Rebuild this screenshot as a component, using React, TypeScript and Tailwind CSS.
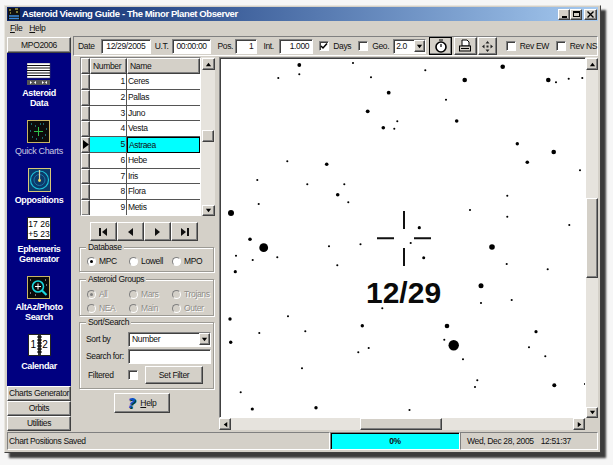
import React from 'react';

const raised = 'border border-t-white border-l-white border-r-[#404040] border-b-[#404040] bg-[#d4d0c8] shadow-[inset_-1px_-1px_0_#808080]';
const sunken = 'border border-t-[#808080] border-l-[#808080] border-r-white border-b-white bg-white shadow-[inset_1px_1px_0_#404040]';
const shallow = 'border border-t-[#808080] border-l-[#808080] border-r-white border-b-white';
const groupBox = 'relative border border-[#9c9a94] shadow-[inset_1px_1px_0_#fff,1px_1px_0_#fff]';

const small: [number, number][] = [
  [353, 63], [299.3, 74.3], [278.3, 78], [371, 77.3], [397.3, 121.3], [394.3, 128.7], [287.3, 161.3], [257.3, 180],
  [307.3, 184.3], [344.3, 184.3], [348.3, 202.3], [258.7, 204], [360.5, 244.3], [425.3, 70.3], [556, 82.3], [568.7, 78.7],
  [582.3, 78], [446, 99.7], [580, 170.3], [507.3, 195.7], [470, 210], [507.3, 216.7], [569.3, 225], [410.7, 243],
  [329, 246.3], [236, 255.7], [277.3, 257.3], [252.7, 260], [337.3, 265.3], [382.3, 308.3], [288, 316.3], [305.3, 331.3],
  [259.3, 333], [368.7, 348], [358.3, 352.3], [302, 368.3], [240.7, 392.3], [409.5, 410], [506.7, 264], [547.7, 269.3],
  [481, 303], [511.7, 300], [444.3, 339.7], [529, 347.3], [463, 359.3], [545.3, 356.3], [477.3, 380.3], [475, 387], [585, 384],
];
const big: [number, number, number][] = [
  [299.3, 65, 1.9], [388.7, 92.7, 1.9], [367.7, 111.3, 1.9], [383.3, 127.7, 1.8], [326.7, 164.3, 1.8], [337.7, 194.7, 1.8],
  [231, 213, 3], [250, 239.3, 1.8], [263.7, 247.7, 4.4], [502.7, 66.7, 2.3], [464.7, 80, 2.3], [548.3, 80, 2.3],
  [456.7, 121, 1.8], [517.3, 143.7, 1.7], [553.7, 152, 2.3], [527.3, 162.3, 1.8], [419.3, 227.7, 1.6], [492, 247, 2.8],
  [235.3, 271.7, 1.6], [230, 319, 1.7], [362.3, 325.7, 1.7], [230.7, 342.3, 1.7], [252.3, 409, 1.6], [316, 407.7, 1.7],
  [423.7, 257.7, 1.5], [481, 285.7, 2.5], [447, 326, 2.3], [536, 331.7, 1.6], [453.7, 345.3, 5.2], [554.3, 385.3, 2],
];

const Arrow = ({ dir, size = 7 }: { dir: 'up' | 'down' | 'left' | 'right'; size?: number }) => {
  const pts = { up: '1,6 7,6 4,2', down: '1,2 7,2 4,6', left: '6,1 6,7 2,4', right: '2,1 2,7 6,4' }[dir];
  return (
    <svg width={size} height={size} viewBox="0 0 8 8">
      <polygon points={pts} fill="#000" />
    </svg>
  );
};

const ScrollBtn = ({ dir, className = '' }: { dir: 'up' | 'down' | 'left' | 'right'; className?: string }) => (
  <div className={`${raised} flex items-center justify-center shrink-0 ${className}`}>
    <Arrow dir={dir} />
  </div>
);

const Radio = ({ on, label, disabled, className = '' }: { on?: boolean; label: string; disabled?: boolean; className?: string }) => (
  <div className={`flex items-center gap-[3px] ${className}`}>
    <span className={`w-[9px] h-[9px] rounded-full border border-t-[#808080] border-l-[#808080] border-r-white border-b-white flex items-center justify-center ${disabled ? 'bg-[#d4d0c8]' : 'bg-white'}`}>
      {on && <span className={`w-[3px] h-[3px] rounded-full ${disabled ? 'bg-[#808080]' : 'bg-black'}`} />}
    </span>
    <span className={disabled ? 'text-[#8f8d88] [text-shadow:1px_1px_0_#fff]' : ''}>{label}</span>
  </div>
);

const Check = ({ on, className = '' }: { on?: boolean; className?: string }) => (
  <span className={`${sunken} w-[10px] h-[10px] flex items-center justify-center shrink-0 ${className}`}>
    {on && (
      <svg width="8" height="8" viewBox="0 0 8 8">
        <path d="M1 4l2 2 4-4.5" fill="none" stroke="#000" strokeWidth="1.5" />
      </svg>
    )}
  </span>
);

const SideItem = ({ icon, lines, dim, top }: { icon: React.ReactNode; lines: string[]; dim?: boolean; top: string }) => (
  <div className="flex flex-col items-center">
    {icon}
    <div className={`${top} text-center leading-[10px] text-[9px] ${dim ? 'text-[#c8c8e0] font-normal' : 'text-white font-bold'}`}>
      {lines.map((l) => (
        <div key={l}>{l}</div>
      ))}
    </div>
  </div>
);

const asteroidIcon = (
  <svg width="24" height="22" viewBox="0 0 24 22" className="block">
    <rect x="0" y="0" width="23" height="15" fill="#fff" stroke="#555" strokeWidth="0.5" />
    <path d="M0 2.5h23M0 5h23M0 7.5h23M0 10h23M0 12.5h23" stroke="#111" strokeWidth="1" />
    <rect x="0" y="17" width="23" height="5" fill="#555" />
    <path d="M3 18l2 1.5-2 1.5zM9 18l-2 1.5 2 1.5zM15 18l2 1.5-2 1.5zM20 18l-2 1.5 2 1.5z" fill="#fff" />
  </svg>
);
const quickIcon = (
  <svg width="23" height="23" viewBox="0 0 23 23" className="block">
    <rect x="0.5" y="0.5" width="22" height="22" fill="#0b0b0b" stroke="#c8b464" />
    <path d="M11.5 7v9M7 11.5h9" stroke="#2fc24a" strokeWidth="1" />
    <path d="M4 4h1M16 4h1M8 6h1M19 9h1M3 11h1M5 17h1M9 19h1M15 18h1M18 15h1M13 4h1" stroke="#30c8d8" strokeWidth="1" />
  </svg>
);
const oppIcon = (
  <svg width="23" height="24" viewBox="0 0 23 24" className="block">
    <rect x="0.5" y="0.5" width="22" height="23" fill="#0c3a6a" stroke="#d8c878" />
    <circle cx="11.5" cy="12" r="9" fill="none" stroke="#1ec0d8" strokeWidth="1.2" />
    <circle cx="11.5" cy="12" r="5.5" fill="none" stroke="#1878a8" strokeWidth="1" />
    <path d="M11.5 12V2" stroke="#e0d8a0" strokeWidth="1.2" />
    <circle cx="11.5" cy="12.5" r="1.4" fill="#f0e060" />
  </svg>
);
const ephIcon = (
  <div className="w-[24px] h-[23px] bg-white border border-[#222] text-black text-[8.5px] tracking-normal leading-[10px] text-center flex flex-col justify-center font-normal">
    <div>17 26</div>
    <div>+5 23</div>
  </div>
);
const altIcon = (
  <svg width="23" height="23" viewBox="0 0 23 23" className="block">
    <rect x="0.5" y="0.5" width="22" height="22" fill="#0a0a0a" stroke="#c8b464" />
    <circle cx="11" cy="10.5" r="5.5" fill="none" stroke="#19d8e0" strokeWidth="1.6" />
    <path d="M11 7.5v6M8 10.5h6" stroke="#fff" strokeWidth="1" />
    <path d="M15 14.5l4.5 4.5" stroke="#19d8e0" strokeWidth="2.2" />
    <path d="M3 4h1M18 4h1M3 17h1M8 19h1M19 9h1" stroke="#ddd" strokeWidth="1" />
  </svg>
);
const calIcon = (
  <div className="relative w-[23px] h-[22px] bg-white border border-[#222] text-black text-[10px] flex items-center justify-between px-[2px] font-normal">
    <span>1</span>
    <span>2</span>
    <svg width="5" height="20" viewBox="0 0 5 20" className="absolute left-[8px] top-0">
      <rect x="1" y="0" width="3" height="20" fill="#333" />
      <path d="M0 2h5M0 5h5M0 8h5M0 11h5M0 14h5M0 17h5" stroke="#000" strokeWidth="1" />
    </svg>
  </div>
);

const rows = ['Ceres', 'Pallas', 'Juno', 'Vesta', 'Astraea', 'Hebe', 'Iris', 'Flora', 'Metis'];

export default function App() {
  return (
    <div className="w-[613px] h-[465px] bg-[#f6f6f6] pt-[5px] pl-[4px] overflow-hidden text-[8.5px] tracking-[-0.35px] leading-none text-[#111] font-['Liberation_Sans',Arial,sans-serif]">
      <div className="w-[597px] h-[448px] border border-t-[#e8e6e0] border-l-[#e8e6e0] border-r-[#404040] border-b-[#404040] bg-[#d4d0c8] pt-[1px] px-[2px] flex flex-col shadow-[5px_5px_2px_#3c3c3c]">
        {/* Title bar */}
        <div className="h-[14px] shrink-0 flex items-center pl-[1px] pr-[1px] bg-gradient-to-r from-[#0a246a] to-[#a6caf0]">
          <svg width="12" height="12" viewBox="0 0 12 12" className="shrink-0">
            <rect width="12" height="12" fill="#111" />
            <path d="M1 2h2M7 1h3M2 5h1M8 4h2" stroke="#e8e060" strokeWidth="1" />
            <path d="M1 8h10M1 10.5h10" stroke="#3a8ae0" strokeWidth="1.6" />
          </svg>
          <span className="ml-[2px] text-white font-bold text-[9.5px] tracking-[-0.4px]">Asteroid Viewing Guide - The Minor Planet Observer</span>
          <div className="ml-auto flex gap-0">
            <div className={`${raised} w-[12px] h-[11px] flex items-end justify-center pb-[1px]`}><span className="w-[5px] h-[2px] bg-black" /></div>
            <div className={`${raised} w-[12px] h-[11px] flex items-center justify-center`}><span className="w-[7px] h-[6px] border border-black border-t-2" /></div>
            <div className={`${raised} w-[13px] h-[11px] ml-[2px] flex items-center justify-center`}>
              <svg width="7" height="7" viewBox="0 0 7 7"><path d="M0.5 0.5l6 6M6.5 0.5l-6 6" stroke="#000" strokeWidth="1.4" /></svg>
            </div>
          </div>
        </div>

        {/* Menu */}
        <div className="h-[15px] shrink-0 flex items-center gap-[7px] pl-[3px]">
          <span><u>F</u>ile</span>
          <span><u>H</u>elp</span>
        </div>

        {/* Body */}
        <div className="h-[396px] shrink-0 flex">
          {/* Sidebar */}
          <div className="w-[65px] shrink-0 flex flex-col">
            <div className={`${raised} h-[16px] w-[64px] mt-[1px] flex items-center justify-center`}>MPO2006</div>
            <div className="w-[64px] h-[333px] bg-[#000080] flex flex-col gap-[12px] pt-[10px] items-center">
              <SideItem icon={asteroidIcon} lines={['Asteroid', 'Data']} top="mt-[3px]" />
              <SideItem icon={quickIcon} lines={['Quick Charts']} dim top="mt-[3px]" />
              <SideItem icon={oppIcon} lines={['Oppositions']} top="mt-[3px]" />
              <SideItem icon={ephIcon} lines={['Ephemeris', 'Generator']} top="mt-[4px]" />
              <SideItem icon={altIcon} lines={['AltAz/Photo', 'Search']} top="mt-[3px]" />
              <SideItem icon={calIcon} lines={['Calendar']} top="mt-[5px]" />
            </div>
            <div className={`${raised} h-[15px] w-[64px] flex items-center justify-center whitespace-nowrap`}>Charts Generator</div>
            <div className={`${raised} h-[15px] w-[64px] flex items-center justify-center`}>Orbits</div>
            <div className={`${raised} h-[15px] w-[64px] flex items-center justify-center`}>Utilities</div>
          </div>

          {/* Main */}
          <div className="flex-1 flex flex-col min-w-0">
            {/* Toolbar */}
            <div className={`h-[20px] shrink-0 ml-[1px] ${shallow} flex items-center whitespace-nowrap`}>
              <span className="ml-[4px] w-[18px]">Date</span>
              <div className={`${sunken} ml-[5px] w-[50px] h-[15px] flex items-center justify-center`}>12/29/2005</div>
              <span className="ml-[4px] w-[14px]">U.T.</span>
              <div className={`${sunken} ml-[3px] w-[40px] h-[15px] flex items-center justify-center`}>00:00:00</div>
              <span className="ml-[6px] w-[15px]">Pos.</span>
              <div className={`${sunken} ml-[3px] w-[22px] h-[15px] flex items-center justify-end pr-[3px]`}>1</div>
              <span className="ml-[6px] w-[11px]">Int.</span>
              <div className={`${sunken} ml-[5px] w-[34px] h-[15px] flex items-center justify-end pr-[3px]`}>1.000</div>
              <Check on className="ml-[6px]" />
              <span className="ml-[4px] w-[17px]">Days</span>
              <Check className="ml-[8px]" />
              <span className="ml-[4px] w-[16px]">Geo.</span>
              <div className={`${sunken} ml-[5px] w-[33px] h-[15px] flex items-center pl-[2px] justify-between`}>
                2.0
                <ScrollBtn dir="down" className="w-[11px] h-[12px] mr-[0.5px]" />
              </div>
              <div className={`${raised} ml-[3px] w-[23px] h-[18px] flex items-center justify-center outline outline-1 outline-black -outline-offset-1`}>
                <svg width="14" height="14" viewBox="0 0 14 14">
                  <circle cx="7" cy="8" r="5" fill="#fff" stroke="#000" strokeWidth="1.6" />
                  <path d="M7 5v3M5 1h4" stroke="#000" strokeWidth="1.2" />
                </svg>
              </div>
              <div className={`${raised} ml-[2px] w-[23px] h-[18px] flex items-center justify-center`}>
                <svg width="14" height="14" viewBox="0 0 14 14">
                  <path d="M4 1h5l2 2v4H4z" fill="#fff" stroke="#000" strokeWidth="1" />
                  <rect x="1.5" y="7" width="11" height="5" fill="#d4d0c8" stroke="#000" strokeWidth="1" />
                  <path d="M3 9.5h8" stroke="#000" strokeWidth="1" />
                </svg>
              </div>
              <div className={`${raised} ml-[1px] w-[19px] h-[18px] flex items-center justify-center`}>
                <svg width="13" height="13" viewBox="0 0 13 13">
                  <path d="M6.5 1l2 2.5h-4zM6.5 12l2-2.5h-4zM1 6.5l2.5-2v4zM12 6.5l-2.5-2v4z" fill="#222" />
                  <rect x="5.5" y="5.5" width="2" height="2" fill="#222" />
                </svg>
              </div>
              <Check className="ml-[9px]" />
              <span className="ml-[4px] w-[26px]">Rev EW</span>
              <Check className="ml-[10px]" />
              <span className="ml-[4px]">Rev NS</span>
            </div>

            <div className="flex-1 flex min-h-0">
              {/* Left panel */}
              <div className="w-[146px] shrink-0 pl-[8px]">
                <div className="flex mt-[1px] w-[135px] h-[159px]">
                  <div className={`${sunken} w-[121px] h-[159px] flex flex-col overflow-hidden`}>
                    <div className="h-[16px] shrink-0 flex">
                      <div className={`${raised} w-[9px]`} />
                      <div className={`${raised} w-[37px] flex items-center pl-[2px]`}>Number</div>
                      <div className={`${raised} flex-1 flex items-center pl-[2px]`}>Name</div>
                    </div>
                    {rows.map((name, i) => {
                      const sel = i === 4;
                      return (
                        <div key={name} className="h-[15.75px] shrink-0 flex">
                          <div className={`${raised} w-[9px] flex items-center justify-center`}>
                            {sel && <svg width="6" height="9" viewBox="0 0 6 9"><polygon points="0,0 6,4.5 0,9" fill="#000" /></svg>}
                          </div>
                          <div className={`w-[37px] flex items-center justify-end pr-[1px] border-b border-r border-[#555] ${sel ? 'bg-[#00ffff]' : 'bg-white'}`}>{i + 1}</div>
                          <div className={`flex-1 flex items-center pl-[1px] ${sel ? 'bg-[#00ffff] border border-black' : 'bg-white border-b border-[#555]'}`}>{name}</div>
                        </div>
                      );
                    })}
                  </div>
                  <div className="w-[14px] h-[159px] flex flex-col items-center bg-[#e6e3dd]">
                    <ScrollBtn dir="up" className="w-[13px] h-[12px] mt-[1px]" />
                    <div className="flex-1 w-full pl-[1px]">
                      <div className={`${raised} w-[12px] h-[12px] mt-[60px]`} />
                    </div>
                    <ScrollBtn dir="down" className="w-[13px] h-[11px]" />
                  </div>
                </div>

                {/* Record navigation */}
                <div className="flex ml-[10px] mt-[6px]">
                  {[
                    <svg key="f" width="9" height="8" viewBox="0 0 9 8"><path d="M0 0h2v8H0zM8 0v8L3 4z" fill="#111" /></svg>,
                    <svg key="p" width="7" height="8" viewBox="0 0 7 8"><path d="M6 0v8L1 4z" fill="#111" /></svg>,
                    <svg key="n" width="7" height="8" viewBox="0 0 7 8"><path d="M1 0v8l5-4z" fill="#111" /></svg>,
                    <svg key="l" width="9" height="8" viewBox="0 0 9 8"><path d="M1 0v8l5-4zM7 0h2v8H7z" fill="#111" /></svg>,
                  ].map((g, i) => (
                    <div key={i} className={`${raised} w-[27px] h-[19px] flex items-center justify-center`}>{g}</div>
                  ))}
                </div>

                {/* Database */}
                <div className={`${groupBox} w-[135px] h-[25px] -ml-[1px] mt-[6px] flex items-center pl-[7px] pt-[3px]`}>
                  <span className="absolute -top-[5px] left-[6px] bg-[#d4d0c8] px-[2px]">Database</span>
                  <Radio on label="MPC" className="w-[42px]" />
                  <Radio label="Lowell" className="w-[43px]" />
                  <Radio label="MPO" />
                </div>

                {/* Asteroid Groups */}
                <div className={`${groupBox} w-[135px] h-[37px] -ml-[1px] mt-[7px] pl-[7px] pt-[7px]`}>
                  <span className="absolute -top-[5px] left-[6px] bg-[#d4d0c8] px-[2px]">Asteroid Groups</span>
                  <div className="flex h-[14px] items-center">
                    <Radio on disabled label="All" className="w-[42px]" />
                    <Radio disabled label="Mars" className="w-[43px]" />
                    <Radio disabled label="Trojans" />
                  </div>
                  <div className="flex h-[14px] items-center">
                    <Radio disabled label="NEA" className="w-[42px]" />
                    <Radio disabled label="Main" className="w-[43px]" />
                    <Radio disabled label="Outer" />
                  </div>
                </div>

                {/* Sort/Search */}
                <div className={`${groupBox} w-[135px] h-[67px] -ml-[1px] mt-[6px] pl-[6px] pt-[8px]`}>
                  <span className="absolute -top-[5px] left-[6px] bg-[#d4d0c8] px-[2px]">Sort/Search</span>
                  <div className="flex items-center h-[16px] whitespace-nowrap">
                    <span className="w-[42px]">Sort by</span>
                    <div className={`${sunken} w-[83px] h-[15px] flex items-center justify-between pl-[3px]`}>
                      Number
                      <ScrollBtn dir="down" className="w-[11px] h-[12px] mr-[0.5px]" />
                    </div>
                  </div>
                  <div className="flex items-center h-[16px] mt-[1px] whitespace-nowrap">
                    <span className="w-[42px]">Search for:</span>
                    <div className={`${sunken} w-[83px] h-[15px]`} />
                  </div>
                  <div className="flex items-center h-[18px] mt-[2px] whitespace-nowrap">
                    <span className="w-[42px] pl-[2px]">Filtered</span>
                    <Check />
                    <div className={`${raised} ml-[7px] w-[58px] h-[18px] flex items-center justify-center`}>Set Filter</div>
                  </div>
                </div>

                {/* Help */}
                <div className={`${raised} ml-[34px] mt-[4px] w-[56px] h-[20px] flex items-center justify-center gap-[5px]`}>
                  <span className="font-['DejaVu_Sans',sans-serif] font-bold italic text-[14px] text-[#0a50c8] [text-shadow:1px_1px_0_#003a30]">?</span>
                  <span><u>H</u>elp</span>
                </div>
              </div>

              {/* Chart */}
              <div className="flex-1 min-w-0 flex flex-col pl-[1px]">
                <div className="flex mt-[1px] h-[361px] shrink-0">
                  <div className={`${sunken} relative w-[367px] h-[361px] overflow-hidden`}>
                    <svg width="365" height="359" viewBox="220 58 365 359" className="absolute left-0 top-0">
                      {small.map(([x, y], i) => (
                        <circle key={i} cx={x} cy={y} r="1.05" fill="#000" />
                      ))}
                      {big.map(([x, y, r], i) => (
                        <circle key={i} cx={x} cy={y} r={r} fill="#000" />
                      ))}
                      <path d="M404 211v18M404 248v18M377 238.3h17M414 238.3h17" stroke="#111" strokeWidth="2" />
                    </svg>
                    <span className="absolute left-[146px] top-[220px] text-[30px] tracking-normal leading-[30px] font-bold text-[#0a0a0a]">12/29</span>
                  </div>
                  <div className="w-[12px] flex flex-col bg-[#e6e3dd]">
                    <ScrollBtn dir="up" className="w-[12px] h-[12px] mt-[1px]" />
                    <div className="flex-1">
                      <div className={`${raised} w-[12px] h-[80px] mt-[128px]`} />
                    </div>
                    <ScrollBtn dir="down" className="w-[12px] h-[11px]" />
                  </div>
                </div>
                <div className="flex h-[12px] shrink-0 w-[379px]">
                  <div className="w-[366px] flex bg-[#e6e3dd]">
                    <ScrollBtn dir="left" className="w-[12px] h-[12px]" />
                    <div className="flex-1">
                      <div className={`${raised} ml-[129px] w-[82px] h-[12px]`} />
                    </div>
                    <ScrollBtn dir="right" className="w-[12px] h-[12px]" />
                  </div>
                </div>
              </div>
            </div>
          </div>
        </div>

        {/* Status bar */}
        <div className="h-[18px] shrink-0 flex">
          <div className={`${shallow} w-[323px] flex items-center pl-[1px]`}>Chart Positions Saved</div>
          <div className={`${shallow} w-[130px] bg-[#00ffff] flex items-center justify-center font-bold shadow-[inset_1px_1px_0_#000]`}>0%</div>
          <div className={`${shallow} flex-1 flex items-center pl-[6px] gap-[7px] whitespace-nowrap`}>
            <span>Wed, Dec 28, 2005</span>
            <span>12:51:37</span>
          </div>
        </div>
      </div>
    </div>
  );
}
